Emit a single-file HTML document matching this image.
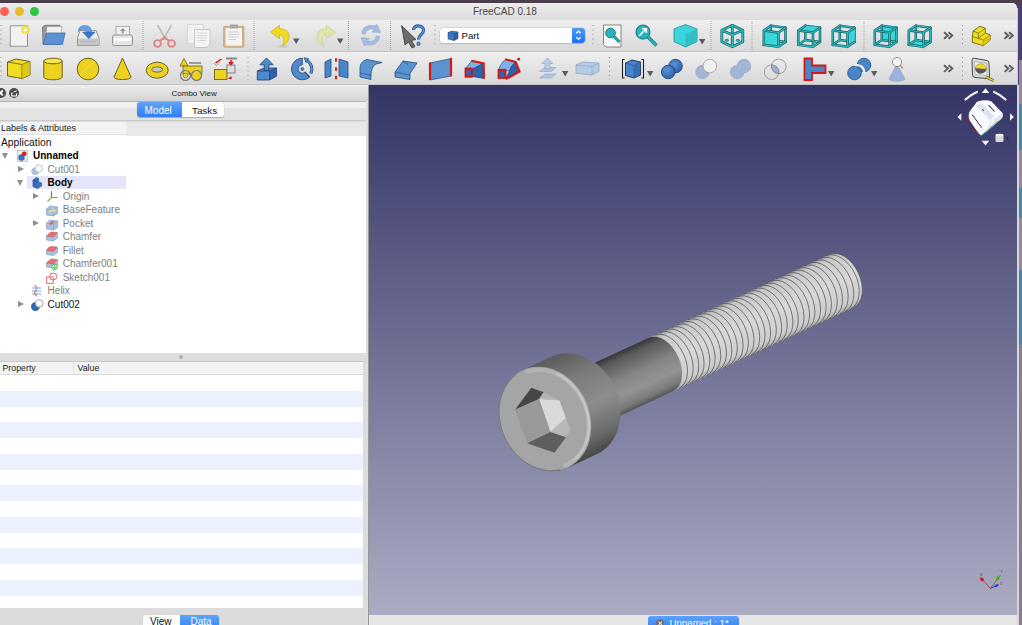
<!DOCTYPE html>
<html><head><meta charset="utf-8">
<style>
*{margin:0;padding:0;box-sizing:border-box}
html,body{width:1022px;height:625px;overflow:hidden;background:#4b3f4b;font-family:"Liberation Sans",sans-serif}
.abs{position:absolute}
#win{position:absolute;left:0;top:3px;width:1017px;height:622px;background:#e4e4e4;border-top-right-radius:5px;overflow:hidden}
#title{position:absolute;left:0;top:0;width:1017px;height:17px;background:linear-gradient(#ececec,#dddddd)}
#title .t{position:absolute;left:473px;top:3px;font-size:10px;color:#4a4a4a;white-space:nowrap}
.light{position:absolute;top:3.5px;width:9px;height:9px;border-radius:50%}
.tb{position:absolute;left:0;width:1017px;background:linear-gradient(#efefef,#d8d8d8);border-bottom:1px solid #c4c4c4}
.sep{position:absolute;width:1px;border-left:1px dotted #9a9a9a}
.ic{position:absolute}
.dd{position:absolute;width:0;height:0;border-left:3.5px solid transparent;border-right:3.5px solid transparent;border-top:6px solid #555}
.chev{position:absolute;font-size:13px;font-weight:bold;color:#555;letter-spacing:-3px}
#left{position:absolute;left:0;top:82px;width:369px;height:540px;background:#dcdcdc}
#view3d{position:absolute;left:369px;top:82px;width:648px;height:530px;background:linear-gradient(#343466,#ababc3)}
.row{position:absolute;left:0;white-space:nowrap;font-size:10px;height:13.5px;line-height:13.5px}
.tri{position:absolute;width:0;height:0}
</style></head><body>
<div id="win">
  <div id="title">
    <div class="light" style="left:0;background:#fc5f57"></div>
    <div class="light" style="left:15px;background:#e8bd2d"></div>
    <div class="light" style="left:30px;background:#2ac940"></div>
    <div class="t">FreeCAD 0.18</div>
  </div>
  <div class="tb" id="tb1" style="top:17px;height:32px"></div>
  <div class="tb" id="tb2" style="top:49px;height:33px"></div>
  <!--TB--><svg id="tbicons" class="abs" style="left:0;top:-3px" width="1022" height="86" viewBox="0 0 1022 86">
<line x1="1" y1="25" x2="1" y2="47" stroke="#8c8c8c" stroke-width="1" stroke-dasharray="1 3.5"/>
<rect x="10.3" y="25.8" width="17.2" height="20.4" fill="#f2f2f2" stroke="#8a8a8a" stroke-width="0.9"/>
<circle cx="25.4" cy="29.9" r="4.3" fill="#f2e23a" opacity="0.95"/><circle cx="25.4" cy="29.9" r="1.6" fill="#fff"/>
<path d="M42.5,27 L45,25.3 L60,25.3 L60,44 L43,44 Z" fill="#9a9a9a" stroke="#6f6f6f" stroke-width="0.8"/>
<path d="M47,26.5 L62,26.5 L61,34 L46,34 Z" fill="#f0f0f0" stroke="#999" stroke-width="0.6"/>
<path d="M46.5,33 L65.2,33 L62.3,44.5 L43,44.5 Z" fill="#5b90d2" stroke="#3f6fae" stroke-width="0.8"/>
<path d="M80,30.5 L96,30.5 L99,38 L99,45.5 L77.5,45.5 L77.5,38 Z" fill="#ececec" stroke="#8c8c8c" stroke-width="0.9"/>
<rect x="78" y="38.5" width="20.5" height="6.8" fill="#c6c6c6"/><path d="M80,41.5 h16" stroke="#b0b0b0" stroke-width="0.8"/>
<path d="M78.3,31.5 C78,26.5 83.5,24.3 88,26 C90.5,27 91.8,29.5 91.5,32.5 L86.2,32.5 C86.2,30.5 84.8,28.8 82.5,29.2 C80.5,29.6 79.2,30.5 78.3,31.5 Z" fill="#6ba0e0" stroke="#3f74b8" stroke-width="0.5"/>
<path d="M82.5,32 H95 L88.8,38.8 Z" fill="#3a78cf" stroke="#2d5ea6" stroke-width="0.5"/>
<rect x="116" y="26.3" width="13.5" height="10" fill="#f0f0f0" stroke="#999" stroke-width="0.8"/>
<path d="M122.8,28 l-3,3 h2 v2.5 h2 v-2.5 h2 z" fill="#9a9a9a"/>
<rect x="112.5" y="35" width="20" height="10.5" rx="2" fill="#e6e6e6" stroke="#8c8c8c" stroke-width="0.9"/>
<rect x="114" y="38" width="17" height="3" fill="#fdfdfd"/>
<line x1="143" y1="21" x2="143" y2="51" stroke="#8e8e8e" stroke-width="1" stroke-dasharray="1 1" opacity="0.75"/>
<path d="M157.5,25 L166,40 M171.5,25 L163,40" stroke="#bbbbbb" stroke-width="1.6" fill="none"/>
<circle cx="157.5" cy="43.5" r="3.4" fill="none" stroke="#de8484" stroke-width="1.9"/><circle cx="171.5" cy="43.5" r="3.4" fill="none" stroke="#de8484" stroke-width="1.9"/>
<path d="M160,41 L164.5,37 L169,41" fill="none" stroke="#de8484" stroke-width="1.8"/>
<rect x="187.5" y="24.5" width="16" height="19" rx="1" fill="#f1f1f1" stroke="#d0d0d0" stroke-width="0.8"/>
<path d="M194.5,29.5 H210 V44 L206.5,47.5 H194.5 Z" fill="#f4f4f4" stroke="#bdbdbd" stroke-width="0.8"/>
<path d="M197,33 h10 M197,35.5 h10 M197,38 h10 M197,40.5 h9" stroke="#cfcfcf" stroke-width="0.8"/>
<rect x="223.5" y="26.3" width="20.5" height="21" rx="0.8" fill="#d4b088" stroke="#c8a070" stroke-width="0.6"/>
<rect x="225.5" y="28" width="16.5" height="17.7" fill="#f4f4f4"/>
<path d="M230,24.5 h8 v4 h-8 z" fill="#a8a8a8"/>
<path d="M228,32 h11 M228,34.5 h11 M228,37 h11 M228,39.5 h8" stroke="#c8c8c8" stroke-width="0.8"/>
<line x1="254" y1="21" x2="254" y2="51" stroke="#8e8e8e" stroke-width="1" stroke-dasharray="1 1" opacity="0.75"/>
<path d="M270.5,32 L279.5,25.3 L279.5,28.8 C286,28.3 289.5,32.5 289,37.5 C288.5,41.5 285.5,44.5 282,46 C284,42.5 284.8,38.5 282.5,36 C281.5,35 280.5,35 279.5,35.2 L279.5,38.7 Z" fill="#f2da22" stroke="#c9ae12" stroke-width="0.7" stroke-linejoin="round"/>
<ellipse cx="283" cy="46.5" rx="6" ry="1.3" fill="#aaa" opacity="0.35"/>
<path d="M293,38.5 h6.4 l-3.2,5.6 z" fill="#5a5a5a"/>
<path d="M335.5,32 L326.5,25.3 L326.5,28.8 C320,28.3 316.5,32.5 317,37.5 C317.5,41.5 320.5,44.5 324,46 C322,42.5 321.2,38.5 323.5,36 C324.5,35 325.5,35 326.5,35.2 L326.5,38.7 Z" fill="#dfe4a8" stroke="#c8cf94" stroke-width="0.7" stroke-linejoin="round"/>
<path d="M337,38.5 h6.4 l-3.2,5.6 z" fill="#5a5a5a"/>
<line x1="348.5" y1="21" x2="348.5" y2="51" stroke="#8e8e8e" stroke-width="1" stroke-dasharray="1 1" opacity="0.75"/>
<path d="M362,34 C362,27 368,24.5 374,26 L377,24.5 L380.5,32.5 L372,32 L374.5,29.5 C369,28 365,31 365.5,34 Z" fill="#a2bde0" stroke="#8fabd2" stroke-width="0.6"/>
<path d="M379.5,36 C379.5,43 373.5,46 367.5,44.5 L364.5,46 L361,37.8 L369.5,38.3 L367,40.8 C372.5,42.5 376.5,39.5 376,36 Z" fill="#a2bde0" stroke="#8fabd2" stroke-width="0.6"/>
<line x1="390.5" y1="21" x2="390.5" y2="51" stroke="#8e8e8e" stroke-width="1" stroke-dasharray="1 1" opacity="0.75"/>
<path d="M401.5,25.5 L416,39.5 L411.5,40.5 L415,46.5 L412,48 L408.5,42 L405,45 Z" fill="#6b6b6b" stroke="#3a3a3a" stroke-width="0.8"/>
<path d="M413.5,30 C413.5,24.5 423.5,24.5 423.5,30.5 C423.5,34.5 418.5,35 418.5,39.5" fill="none" stroke="#2d5c99" stroke-width="3.2"/>
<path d="M413.5,30 C413.5,24.5 423.5,24.5 423.5,30.5 C423.5,34.5 418.5,35 418.5,39.5" fill="none" stroke="#4d8fd6" stroke-width="1.6"/>
<rect x="417" y="42" width="3" height="3.5" rx="1" fill="#4d8fd6" stroke="#2d5c99" stroke-width="0.7"/>
<line x1="435" y1="25" x2="435" y2="47" stroke="#8c8c8c" stroke-width="1" stroke-dasharray="1 3.5"/>
<line x1="593" y1="25" x2="593" y2="47" stroke="#8c8c8c" stroke-width="1" stroke-dasharray="1 3.5"/>
<path d="M603.5,25 H621 V47 H606 L603.5,44.5 Z" fill="#f7f7f7" stroke="#6a6a6a" stroke-width="0.8"/>
<circle cx="610.5" cy="33" r="4.8" fill="#27b5bd" stroke="#137a80" stroke-width="1"/>
<line x1="614" y1="36.5" x2="619.5" y2="42" stroke="#137a80" stroke-width="3"/><line x1="614" y1="36.5" x2="619.5" y2="42" stroke="#27b5bd" stroke-width="1.6"/>
<circle cx="643" cy="32" r="7" fill="#27b5bd" stroke="#137a80" stroke-width="1.1"/>
<path d="M639,36 L646,29 M642,28.7 H646.3 V33" fill="none" stroke="#fff" stroke-width="1.6"/>
<line x1="648" y1="37" x2="656.5" y2="45.5" stroke="#137a80" stroke-width="3.4"/><line x1="648" y1="37" x2="656.5" y2="45.5" stroke="#27b5bd" stroke-width="1.8"/>
<path d="M685.5,24.5 L697,29 L697,41.5 L685.5,47 L674,41.5 L674,29 Z" fill="#3cd5dc" stroke="#1b8d92" stroke-width="0.8"/>
<path d="M685.5,34 L697,29 L697,41.5 L685.5,47 Z" fill="#2fb8c0" opacity="0.8"/>
<path d="M699,39 h6.4 l-3.2,5.6 z" fill="#5a5a5a"/>
<line x1="711" y1="21" x2="711" y2="51" stroke="#8e8e8e" stroke-width="1" stroke-dasharray="1 1" opacity="0.75"/>
<path d="M732.3,25.3 L742.8,30.3 L742.8,41.8 L732.3,46.8 L721.8,41.8 L721.8,30.3 Z M721.8,30.3 L732.3,34.8 L742.8,30.3 M732.3,34.8 L732.3,46.8 M732.3,25.3 L732.3,32.8" fill="none" stroke="#17686b" stroke-width="2.8" stroke-linejoin="round"/><path d="M732.3,25.3 L742.8,30.3 L742.8,41.8 L732.3,46.8 L721.8,41.8 L721.8,30.3 Z M721.8,30.3 L732.3,34.8 L742.8,30.3 M732.3,34.8 L732.3,46.8 M732.3,25.3 L732.3,32.8" fill="none" stroke="#2fb9be" stroke-width="1.4" stroke-linejoin="round"/><ellipse cx="726.8" cy="40.3" rx="1.8" ry="1" fill="#2fb9be" stroke="#17686b" stroke-width="0.7"/><ellipse cx="737.8" cy="40.3" rx="1.8" ry="1" fill="#2fb9be" stroke="#17686b" stroke-width="0.7"/>
<line x1="752" y1="21" x2="752" y2="51" stroke="#8e8e8e" stroke-width="1" stroke-dasharray="1 1" opacity="0.75"/>
<path d="M770.8,25.7 L785.5,27.7 M785.5,27.7 L785.5,42.0 M785.5,42.0 L770.8,40.0 M770.8,40.0 L770.8,25.7 M763.8,44.8 L770.8,40.0" fill="none" stroke="#17686b" stroke-width="2.6" stroke-linecap="round"/><path d="M770.8,25.7 L785.5,27.7 M785.5,27.7 L785.5,42.0 M785.5,42.0 L770.8,40.0 M770.8,40.0 L770.8,25.7 M763.8,44.8 L770.8,40.0" fill="none" stroke="#2fb9be" stroke-width="1.2" stroke-linecap="round"/><polygon points="763.8,30.5 778.5,32.5 778.5,46.8 763.8,44.8" fill="#3ad6dc"/><path d="M763.8,30.5 L770.8,25.7 M778.5,32.5 L785.5,27.7 M778.5,46.8 L785.5,42.0 M763.8,30.5 L778.5,32.5 M778.5,32.5 L778.5,46.8 M778.5,46.8 L763.8,44.8 M763.8,44.8 L763.8,30.5" fill="none" stroke="#17686b" stroke-width="2.6" stroke-linecap="round"/><path d="M763.8,30.5 L770.8,25.7 M778.5,32.5 L785.5,27.7 M778.5,46.8 L785.5,42.0 M763.8,30.5 L778.5,32.5 M778.5,32.5 L778.5,46.8 M778.5,46.8 L763.8,44.8 M763.8,44.8 L763.8,30.5" fill="none" stroke="#2fb9be" stroke-width="1.2" stroke-linecap="round"/>
<path d="M805.3,25.7 L820.0,27.7 M820.0,27.7 L820.0,42.0 M820.0,42.0 L805.3,40.0 M805.3,40.0 L805.3,25.7 M798.3,44.8 L805.3,40.0" fill="none" stroke="#17686b" stroke-width="2.6" stroke-linecap="round"/><path d="M805.3,25.7 L820.0,27.7 M820.0,27.7 L820.0,42.0 M820.0,42.0 L805.3,40.0 M805.3,40.0 L805.3,25.7 M798.3,44.8 L805.3,40.0" fill="none" stroke="#2fb9be" stroke-width="1.2" stroke-linecap="round"/><polygon points="798.3,30.5 805.3,25.7 820.0,27.7 813.0,32.5" fill="#3ad6dc"/><path d="M798.3,30.5 L805.3,25.7 M813.0,32.5 L820.0,27.7 M813.0,46.8 L820.0,42.0 M798.3,30.5 L813.0,32.5 M813.0,32.5 L813.0,46.8 M813.0,46.8 L798.3,44.8 M798.3,44.8 L798.3,30.5" fill="none" stroke="#17686b" stroke-width="2.6" stroke-linecap="round"/><path d="M798.3,30.5 L805.3,25.7 M813.0,32.5 L820.0,27.7 M813.0,46.8 L820.0,42.0 M798.3,30.5 L813.0,32.5 M813.0,32.5 L813.0,46.8 M813.0,46.8 L798.3,44.8 M798.3,44.8 L798.3,30.5" fill="none" stroke="#2fb9be" stroke-width="1.2" stroke-linecap="round"/>
<path d="M839.8,25.7 L854.5,27.7 M854.5,27.7 L854.5,42.0 M854.5,42.0 L839.8,40.0 M839.8,40.0 L839.8,25.7 M832.8,44.8 L839.8,40.0" fill="none" stroke="#17686b" stroke-width="2.6" stroke-linecap="round"/><path d="M839.8,25.7 L854.5,27.7 M854.5,27.7 L854.5,42.0 M854.5,42.0 L839.8,40.0 M839.8,40.0 L839.8,25.7 M832.8,44.8 L839.8,40.0" fill="none" stroke="#2fb9be" stroke-width="1.2" stroke-linecap="round"/><polygon points="847.5,32.5 854.5,27.7 854.5,42.0 847.5,46.8" fill="#3ad6dc"/><path d="M832.8,30.5 L839.8,25.7 M847.5,32.5 L854.5,27.7 M847.5,46.8 L854.5,42.0 M832.8,30.5 L847.5,32.5 M847.5,32.5 L847.5,46.8 M847.5,46.8 L832.8,44.8 M832.8,44.8 L832.8,30.5" fill="none" stroke="#17686b" stroke-width="2.6" stroke-linecap="round"/><path d="M832.8,30.5 L839.8,25.7 M847.5,32.5 L854.5,27.7 M847.5,46.8 L854.5,42.0 M832.8,30.5 L847.5,32.5 M847.5,32.5 L847.5,46.8 M847.5,46.8 L832.8,44.8 M832.8,44.8 L832.8,30.5" fill="none" stroke="#2fb9be" stroke-width="1.2" stroke-linecap="round"/>
<line x1="864" y1="21" x2="864" y2="51" stroke="#8e8e8e" stroke-width="1" stroke-dasharray="1 1" opacity="0.75"/>
<polygon points="881.8,25.7 896.5,27.7 896.5,42.0 881.8,40.0" fill="#3ad6dc"/><path d="M881.8,25.7 L896.5,27.7 M896.5,27.7 L896.5,42.0 M896.5,42.0 L881.8,40.0 M881.8,40.0 L881.8,25.7 M874.8,44.8 L881.8,40.0" fill="none" stroke="#17686b" stroke-width="2.6" stroke-linecap="round"/><path d="M881.8,25.7 L896.5,27.7 M896.5,27.7 L896.5,42.0 M896.5,42.0 L881.8,40.0 M881.8,40.0 L881.8,25.7 M874.8,44.8 L881.8,40.0" fill="none" stroke="#2fb9be" stroke-width="1.2" stroke-linecap="round"/><path d="M874.8,30.5 L881.8,25.7 M889.5,32.5 L896.5,27.7 M889.5,46.8 L896.5,42.0 M874.8,30.5 L889.5,32.5 M889.5,32.5 L889.5,46.8 M889.5,46.8 L874.8,44.8 M874.8,44.8 L874.8,30.5" fill="none" stroke="#17686b" stroke-width="2.6" stroke-linecap="round"/><path d="M874.8,30.5 L881.8,25.7 M889.5,32.5 L896.5,27.7 M889.5,46.8 L896.5,42.0 M874.8,30.5 L889.5,32.5 M889.5,32.5 L889.5,46.8 M889.5,46.8 L874.8,44.8 M874.8,44.8 L874.8,30.5" fill="none" stroke="#2fb9be" stroke-width="1.2" stroke-linecap="round"/>
<polygon points="908.8,44.8 923.5,46.8 930.5,42.0 915.8,40.0" fill="#3ad6dc"/><path d="M915.8,25.7 L930.5,27.7 M930.5,27.7 L930.5,42.0 M930.5,42.0 L915.8,40.0 M915.8,40.0 L915.8,25.7 M908.8,44.8 L915.8,40.0" fill="none" stroke="#17686b" stroke-width="2.6" stroke-linecap="round"/><path d="M915.8,25.7 L930.5,27.7 M930.5,27.7 L930.5,42.0 M930.5,42.0 L915.8,40.0 M915.8,40.0 L915.8,25.7 M908.8,44.8 L915.8,40.0" fill="none" stroke="#2fb9be" stroke-width="1.2" stroke-linecap="round"/><path d="M908.8,30.5 L915.8,25.7 M923.5,32.5 L930.5,27.7 M923.5,46.8 L930.5,42.0 M908.8,30.5 L923.5,32.5 M923.5,32.5 L923.5,46.8 M923.5,46.8 L908.8,44.8 M908.8,44.8 L908.8,30.5" fill="none" stroke="#17686b" stroke-width="2.6" stroke-linecap="round"/><path d="M908.8,30.5 L915.8,25.7 M923.5,32.5 L930.5,27.7 M923.5,46.8 L930.5,42.0 M908.8,30.5 L923.5,32.5 M923.5,32.5 L923.5,46.8 M923.5,46.8 L908.8,44.8 M908.8,44.8 L908.8,30.5" fill="none" stroke="#2fb9be" stroke-width="1.2" stroke-linecap="round"/>
<path d="M944,32.2 l3.8,3.3 l-3.8,3.3 M948.5,32.2 l3.8,3.3 l-3.8,3.3" fill="none" stroke="#5c5c5c" stroke-width="1.9"/>
<line x1="962.5" y1="25" x2="962.5" y2="47" stroke="#8c8c8c" stroke-width="1" stroke-dasharray="1 3.5"/>
<path d="M973,31 L980,26.2 L985.4,28.3 L985.4,33 L990.3,35 L990.3,40 L983.3,45.7 L972.4,42.5 L972.4,36.5 Z" fill="#f2dc1e" stroke="#5e5a10" stroke-width="0.8" stroke-linejoin="round"/>
<path d="M973,31 L978.4,33.2 L985.4,28.3 M978.4,33.2 L978.4,38 M972.4,36.5 L983.3,40 L990.3,35 M983.3,40 V45.7 M978.4,38 L985.4,33" fill="none" stroke="#5e5a10" stroke-width="0.7"/>
<path d="M983.3,40 L990.3,35 V40 L983.3,45.7 Z" fill="#d8c010"/>
<path d="M1004.5,32.2 l3.8,3.3 l-3.8,3.3 M1009.0,32.2 l3.8,3.3 l-3.8,3.3" fill="none" stroke="#5c5c5c" stroke-width="1.9"/>
<line x1="1" y1="57" x2="1" y2="80" stroke="#8c8c8c" stroke-width="1" stroke-dasharray="1 3.5"/>
<line x1="248" y1="57" x2="248" y2="80" stroke="#8c8c8c" stroke-width="1" stroke-dasharray="1 3.5"/>
<path d="M562,71 h6.4 l-3.2,5.6 z" fill="#5a5a5a"/>
<line x1="609.5" y1="57" x2="609.5" y2="80" stroke="#8c8c8c" stroke-width="1" stroke-dasharray="1 3.5"/>
<path d="M647,71 h6.4 l-3.2,5.6 z" fill="#5a5a5a"/>
<path d="M828,71 h6.4 l-3.2,5.6 z" fill="#5a5a5a"/>
<path d="M871,71 h6.4 l-3.2,5.6 z" fill="#5a5a5a"/>
<path d="M944,65.3 l3.8,3.3 l-3.8,3.3 M948.5,65.3 l3.8,3.3 l-3.8,3.3" fill="none" stroke="#5c5c5c" stroke-width="1.9"/>
<line x1="962.5" y1="57" x2="962.5" y2="80" stroke="#8c8c8c" stroke-width="1" stroke-dasharray="1 3.5"/>
<path d="M1004.5,65.3 l3.8,3.3 l-3.8,3.3 M1009.0,65.3 l3.8,3.3 l-3.8,3.3" fill="none" stroke="#5c5c5c" stroke-width="1.9"/>
<path d="M7.5,62 L16,59 L30,61.5 L30,75 L22,78.5 L7.5,76 Z" fill="#f1dc22" stroke="#5c5410" stroke-width="0.9" stroke-linejoin="round"/>
<path d="M7.5,62 L22,64.5 L30,61.5 M22,64.5 V78.5" fill="none" stroke="#5c5410" stroke-width="0.8"/>
<path d="M22,64.5 L30,61.5 L30,75 L22,78.5 Z" fill="#d6bd10" opacity="0.7"/>
<path d="M43.8,61 V77 A9.2,2.8 0 0 0 62.2,77 V61" fill="#ecd21e" stroke="#5c5410" stroke-width="0.9"/>
<ellipse cx="53" cy="61" rx="9.2" ry="2.8" fill="#f7e84a" stroke="#5c5410" stroke-width="0.9"/>
<circle cx="88" cy="69" r="10.8" fill="#ecd21e" stroke="#5c5410" stroke-width="0.9"/>
<path d="M80,75 Q88,66 95,62" stroke="#f7e96a" stroke-width="1" fill="none" opacity="0.6"/>
<path d="M122.5,58 L131,77 A8.5,2.6 0 0 1 114,77 Z" fill="#ecd21e" stroke="#5c5410" stroke-width="0.9" stroke-linejoin="round"/>
<ellipse cx="157.2" cy="70.2" rx="11" ry="8" fill="#ecd21e" stroke="#5c5410" stroke-width="0.9"/>
<ellipse cx="157.2" cy="69.5" rx="5.5" ry="2.6" fill="#c8c8c8" stroke="#5c5410" stroke-width="0.8"/>
<path d="M184,58.5 L188,66 H180 Z" fill="#ecd21e" stroke="#5c5410" stroke-width="0.7"/>
<rect x="189" y="62" width="12" height="2" fill="#9a9a9a"/>
<rect x="183" y="66" width="19" height="8" fill="#ecd21e" stroke="#5c5410" stroke-width="0.7"/>
<circle cx="185.5" cy="75.5" r="5" fill="none" stroke="#777" stroke-width="1.2"/><circle cx="185.5" cy="75.5" r="2.3" fill="#ecd21e" stroke="#666" stroke-width="0.6"/>
<circle cx="196.5" cy="75.5" r="5" fill="#ecd21e" stroke="#777" stroke-width="1.2"/>
<rect x="214.5" y="69.5" width="12.5" height="10" fill="#ecd21e" stroke="#5c5410" stroke-width="0.8"/>
<rect x="227" y="65" width="8" height="8" fill="#ddd" stroke="#777" stroke-width="0.9"/>
<rect x="226" y="57.5" width="11" height="2" fill="#888"/>
<path d="M231,60 V64 M229,62 L231,64.5 L233,62" stroke="#d91616" stroke-width="1.5" fill="none"/>
<path d="M216,63 L220,60 M218.5,61 l3,-2" stroke="#d91616" stroke-width="1.5"/><rect x="215" y="62" width="3" height="3" fill="none" stroke="#777" stroke-width="0.7" transform="rotate(45 216.5 63.5)"/>
<path d="M228,79 l3,-3 l1,3 z" fill="#d91616"/>
<path d="M257.3,71 L264,68 L276.5,68 L276.5,76.3 L269.5,80 L257.3,80 Z" fill="#4f8ad0" stroke="#1c3d6e" stroke-width="0.8" stroke-linejoin="round"/>
<path d="M269.5,71 L276.5,68 L276.5,76.3 L269.5,80 Z" fill="#2f62a8"/><path d="M257.3,71 L269.5,71 L276.5,68 M269.5,71 V80" fill="none" stroke="#1c3d6e" stroke-width="0.7"/>
<path d="M266.5,58 L273.2,64.8 H268.8 V70.5 H264.2 V64.8 H259.8 Z" fill="#4f8ad0" stroke="#1c3d6e" stroke-width="0.8" stroke-linejoin="round"/>
<path d="M302.30,58.20 A10.8,10.8 0 1 0 309.94,76.64 L305.27,71.97 A4.2,4.2 0 1 1 302.30,64.80 Z" fill="#4f8ad0" stroke="#1c3d6e" stroke-width="0.8" stroke-linejoin="round"/>
<path d="M305.00,72.22 L309.24,77.27" stroke="#1c3d6e" stroke-width="0.8"/><path d="M302.30,58.20 A10.8,10.8 0 1 0 309.94,76.64 L305.27,71.97 A4.2,4.2 0 1 1 302.30,64.80 Z" fill="none"/>
<circle cx="302.3" cy="69" r="1.6" fill="#4f8ad0" stroke="#1c3d6e" stroke-width="0.5"/>
<path d="M305.55,60.07 A9.5,9.5 0 0 1 310.69,73.46" fill="none" stroke="#1c3d6e" stroke-width="3"/><path d="M305.55,60.07 A9.5,9.5 0 0 1 310.69,73.46" fill="none" stroke="#5a94d8" stroke-width="1.8"/>
<path d="M303.90,57.61 l4.8,1.2 l-2.6,3.6 z" fill="#5a94d8" stroke="#1c3d6e" stroke-width="0.6"/>
<path d="M325,62 L331,59 V76 L325,78 Z" fill="#4a86c6" stroke="#1f4f80" stroke-width="0.8"/>
<path d="M339,59 L348,62 V78 L339,76 Z" fill="#4a86c6" stroke="#1f4f80" stroke-width="0.8"/>
<rect x="335" y="58" width="2" height="4" rx="1" fill="#d92020"/><rect x="335" y="67" width="2" height="4" rx="1" fill="#d92020"/><rect x="335" y="75.5" width="2" height="4" rx="1" fill="#d92020"/>
<path d="M360,76 V69 C360,64 362,61 367,59.5 L382,62.5 L376,64 C373,66 371,69 371,76 V79.5 L360,77 Z" fill="#5a93d0" stroke="#1f4f80" stroke-width="0.8" stroke-linejoin="round"/>
<path d="M360,73 L371,75.5" stroke="#1f4f80" stroke-width="0.6"/>
<path d="M395,72 L403,61 L417,63 L410,73.5 V79.5 L395,77 Z" fill="#5a93d0" stroke="#1f4f80" stroke-width="0.8" stroke-linejoin="round"/>
<path d="M395,72 L410,75 M403,61.5 L408,64.5" stroke="#1f4f80" stroke-width="0.6"/>
<path d="M430,63 L451,58.5 V76 L430,80 Z" fill="#5a93d0" stroke="#1f4f80" stroke-width="0.7"/>
<path d="M430,62.5 V80 M451,58 V76.5" stroke="#d91616" stroke-width="2.2"/>
<path d="M465.5,68.5 L471.5,61 L483.5,63.5 L472,69.5 Z" fill="#7fb0e8" stroke="#1c3d6e" stroke-width="0.6"/>
<path d="M472,69.5 L483.5,63.5 L483.8,78.5 L472,76.5 Z" fill="#2f62a8" stroke="#1c3d6e" stroke-width="0.6"/>
<rect x="465.5" y="68.5" width="6.3" height="8.3" fill="#2f62a8" stroke="#e01010" stroke-width="1.8"/>
<path d="M471.3,60.8 L483.7,63.3 L484,78.8" fill="none" stroke="#e01010" stroke-width="2"/>
<path d="M498.5,70.5 C500,65 503,61 505.5,59.5 L515.5,62 C512,65 510.5,68 509.5,71 Z" fill="#7fb0e8" stroke="#1c3d6e" stroke-width="0.6"/>
<path d="M505.5,78.5 L509.5,71 C510.5,68 512,65 515.5,62 L519.5,71.5 L506,79 Z" fill="#2f62a8" stroke="#1c3d6e" stroke-width="0.6"/>
<rect x="498.5" y="69.8" width="7" height="8.2" fill="#2f62a8" stroke="#e01010" stroke-width="1.8"/>
<path d="M505.3,59.3 L515.6,61.9 L519.6,71.6 L505.8,79.2" fill="none" stroke="#e01010" stroke-width="2"/>
<circle cx="518.7" cy="59.2" r="1.4" fill="#c01010"/>
<path d="M539.5,78 L545,74 H556 L551,78 Z" fill="#b2c8e2" stroke="#8aa3c2" stroke-width="0.6"/>
<path d="M539.5,71.5 L545,67.5 H556 L551,71.5 Z" fill="#b2c8e2" stroke="#8aa3c2" stroke-width="0.6"/>
<path d="M547.5,58 L553,63.5 H550 V69 H545 V63.5 H542 Z" fill="#b8cde6" stroke="#8aa3c2" stroke-width="0.6"/>
<path d="M576,65 L582.5,62 L599,63 V71.5 L592,75 L576,73.5 Z" fill="#b5cbe5" stroke="#8aa3c2" stroke-width="0.7"/>
<path d="M576,65 L592,66.5 L599,63 M592,66.5 V75" fill="none" stroke="#8aa3c2" stroke-width="0.6"/>
<path d="M624.5,59.5 h-2 v18.5 h2 M641.5,59.5 h2 v18.5 h-2" fill="none" stroke="#222" stroke-width="1.1"/>
<path d="M625.5,63 L632,60 L640.5,62 V75 L634,78 L625.5,75.5 Z" fill="#4a84cc" stroke="#1c3050" stroke-width="0.9"/>
<path d="M625.5,63 L634,65.5 L640.5,62 M634,65.5 V78" fill="none" stroke="#1f4f80" stroke-width="0.6"/><path d="M634,65.5 L640.5,62 V75 L634,78 Z" fill="#2f62a0" opacity="0.6"/>
<defs><radialGradient id="gb" cx="0.4" cy="0.35" r="0.7"><stop offset="0" stop-color="#5a92d6"/><stop offset="1" stop-color="#2a5fa8"/></radialGradient></defs>
<circle cx="675.5" cy="66.1" r="6.8" fill="url(#gb)" stroke="#1f3f6a" stroke-width="0.8"/><circle cx="668.2" cy="72" r="6.8" fill="url(#gb)" stroke="#1f3f6a" stroke-width="0.8"/>
<circle cx="702.5" cy="72" r="6.8" fill="#a0b6d6" stroke="#95a8c4" stroke-width="0.6"/><circle cx="709.8" cy="66.1" r="6.8" fill="#f0f0f0" stroke="#9a9a9a" stroke-width="0.8"/>
<circle cx="737.2" cy="72" r="6.8" fill="#a0b6d6" stroke="#98a6bb" stroke-width="0.7"/><circle cx="744" cy="66.1" r="6.8" fill="#a0b6d6" stroke="#98a6bb" stroke-width="0.7"/><circle cx="737.2" cy="72" r="6.3" fill="#a0b6d6"/>
<path d="M778.74,73.70 A7.3,7.3 0 0 1 771.66,64.90 A7.3,7.3 0 0 1 778.74,73.70 Z" fill="#9bb3d8" stroke="#6f84a8" stroke-width="0.5"/>
<circle cx="771.6" cy="72.2" r="7.3" fill="none" stroke="#8a8a8a" stroke-width="0.8"/><circle cx="778.8" cy="66.4" r="7.3" fill="none" stroke="#8a8a8a" stroke-width="0.8"/>
<path d="M804.5,58.5 H812 V65.5 H825.5 V73 H812 V80 H804.5 Z" fill="#4a86c6" stroke="#d91616" stroke-width="1.8"/>
<circle cx="864" cy="65" r="6.8" fill="#4a86c6" stroke="#1f4f80" stroke-width="0.8"/><circle cx="854.5" cy="73" r="6.8" fill="#4a86c6" stroke="#1f4f80" stroke-width="0.8"/>
<path d="M855,65.5 A6.8,6.8 0 0 1 864,73" fill="none" stroke="#f0f0f0" stroke-width="2.2"/>
<path d="M897,64 L905,79 A8,2.2 0 0 1 889,79 Z" fill="#9bb3d8" stroke="#8c9ec0" stroke-width="0.6"/>
<circle cx="897" cy="62" r="4.6" fill="#f6f6f6" stroke="#888" stroke-width="0.9"/><path d="M900,65 L903,68.5" stroke="#d09060" stroke-width="1.5"/>
<path d="M972,60 Q972,58 974,58.2 L987,60.5 Q989,61 989,63 L989.5,76 Q989.5,78 987.5,78.5 L975,77.5 Q972.5,77 972.5,75 Z" fill="#dcdcdc" stroke="#3a3a3a" stroke-width="0.9"/>
<path d="M974.5,61.5 L986.5,63.5 L987,75.5 L975,74.5 Z" fill="#efefef" stroke="#888" stroke-width="0.5"/>
<path d="M975,68.3 A5.8,5.6 0 0 1 986.5,69.2 Z" fill="#f0dc1e" stroke="#555" stroke-width="0.4"/><path d="M975,68.3 A5.8,5.6 0 0 0 986.5,69.2 Z" fill="#575757"/>
<path d="M986,77 L993.5,80.5" stroke="#3a3a3a" stroke-width="2.8"/><path d="M986,77 L993.5,80.5" stroke="#eed830" stroke-width="1.6"/>
</svg><div id="combo" class="abs" style="left:440px;top:25px;width:144.5px;height:14.5px;border-radius:3.5px;background:#fff;box-shadow:0 0 0 0.5px #c6c6c6,0 0.6px 1px rgba(0,0,0,0.2)">
  <div class="abs" style="left:131.5px;top:0;width:13px;height:14.5px;border-radius:0 3.5px 3.5px 0;background:linear-gradient(#4d9bf9,#1e6ff0)"></div>
  <svg class="abs" style="left:131.5px;top:0" width="13" height="14.5"><path d="M4.3,5.3 L6.5,3.2 L8.7,5.3 M4.3,9.2 L6.5,11.3 L8.7,9.2" fill="none" stroke="#fff" stroke-width="1.2"/></svg>
  <svg class="abs" style="left:6.5px;top:2px" width="12" height="11"><path d="M1,2.5 L5,1 L11,2 V8.5 L7,10.5 L1,9 Z" fill="#3f78bd" stroke="#24558f" stroke-width="0.6"/><path d="M1,2.5 L7,4 L11,2 M7,4 V10.5" fill="none" stroke="#24558f" stroke-width="0.5"/><path d="M7,4 L11,2 V8.5 L7,10.5 Z" fill="#2c5f9e"/></svg>
  <div class="abs" style="left:21.5px;top:1px;font-size:9.6px;line-height:13px;color:#111">Part</div>
</div><!--/TB-->
  <div id="left">
    <div class="abs" id="cvhdr" style="left:0;top:0;width:369px;height:17px;background:linear-gradient(#ededed,#d3d3d3);border-bottom:1px solid #b4b4b4">
      <div class="abs" style="left:-4.5px;top:3px;width:10px;height:10px;border-radius:50%;background:#4a4a4a"></div>
      <div class="abs" style="left:9.2px;top:3px;width:10.3px;height:10.3px;border-radius:50%;background:#4a4a4a"></div>
      <div class="abs" style="left:171.5px;top:4px;font-size:8px;color:#1a1a1a;white-space:nowrap">Combo View</div>
    </div>
    <div class="abs" style="left:0;top:17px;width:366px;height:6px;background:#efefef"></div>
    <div class="abs" style="left:0;top:23px;width:366px;height:13px;background:#e3e3e3;border-bottom:1px solid #c9c9c9"></div>
    <div class="abs" style="left:137px;top:17.2px;width:87px;height:15px;border-radius:3px;background:#fff;box-shadow:0 0.5px 1px rgba(0,0,0,0.25)"></div>
    <div class="abs" style="left:137px;top:17.2px;width:45px;height:15px;border-radius:3px 0 0 3px;background:linear-gradient(#5fa3f9,#2f7ef5)"></div>
    <div class="abs" style="left:144.5px;top:18.5px;font-size:10px;color:#fff;line-height:13px">Model</div>
    <div class="abs" style="left:192px;top:18.5px;font-size:9.8px;color:#111;line-height:13px">Tasks</div>
    <!-- tree -->
    <div class="abs" id="tree" style="left:0;top:37px;width:366px;height:231px;background:#fff;overflow:hidden">
      <div class="abs" style="left:0;top:0;width:126px;height:13px;background:#f3f3f3;border-bottom:1px solid #e0e0e0"></div>
      <div class="abs" style="left:126px;top:0;width:240px;height:13.5px;background:#e9e9e9"></div>
      <div class="abs" style="left:1px;top:0;font-size:9px;line-height:13px;color:#222;white-space:nowrap">Labels &amp; Attributes</div>
      <div class="abs" style="left:27px;top:54px;width:99px;height:13px;background:#e4e4fa"></div>
      <div class="row" style="top:13.70px;left:1px;color:#111;font-size:10.3px;">Application</div>
      <div class="row" style="top:27.20px;left:33px;color:#000;font-weight:bold;font-size:10px;">Unnamed</div>
      <div class="tri" style="left:2px;top:31.0px;border-left:3.5px solid transparent;border-right:3.5px solid transparent;border-top:6px solid #8e8e8e"></div>
      <svg class="abs" style="left:17px;top:27.0px" width="14" height="14"><rect x="0.5" y="1.5" width="9.8" height="10.8" fill="#f2f2f2" stroke="#b8b8b8" stroke-width="0.8"/><path d="M1.8,6.5 L4.5,5.3 L7.2,6.5 V10.5 L4.5,11.8 L1.8,10.5 Z" fill="#3a70bf" stroke="#244f8c" stroke-width="0.5"/><circle cx="7.2" cy="4.8" r="2.4" fill="#d92020"/></svg>
      <div class="row" style="top:40.70px;left:47.6px;color:#7e7e7e;">Cut001</div>
      <div class="tri" style="left:17.5px;top:43.5px;border-top:3.5px solid transparent;border-bottom:3.5px solid transparent;border-left:6px solid #8e8e8e"></div>
      <svg class="abs" style="left:31px;top:40.5px" width="14" height="14"><circle cx="4.2" cy="8.2" r="3.8" fill="#a9c0de"/><circle cx="7.8" cy="5.5" r="3.7" fill="#fafafa" stroke="#b0b0b0" stroke-width="0.7"/></svg>
      <div class="row" style="top:54.20px;left:47.6px;color:#000;font-weight:bold;font-size:10px;">Body</div>
      <div class="tri" style="left:17px;top:58.0px;border-left:3.5px solid transparent;border-right:3.5px solid transparent;border-top:6px solid #8e8e8e"></div>
      <svg class="abs" style="left:32px;top:54.0px" width="14" height="14"><path d="M1,4 L4.5,1.5 L6.5,2.5 V6 L9.5,7 V10 L5.5,12.5 L1,10.5 Z" fill="#3a72c0" stroke="#234e8a" stroke-width="0.7" stroke-linejoin="round"/><path d="M1,4 L4,5.5 L6.5,3 M4,5.5 V12" fill="none" stroke="#234e8a" stroke-width="0.5"/></svg>
      <div class="row" style="top:67.70px;left:62.7px;color:#7e7e7e;">Origin</div>
      <div class="tri" style="left:33px;top:70.5px;border-top:3.5px solid transparent;border-bottom:3.5px solid transparent;border-left:6px solid #8e8e8e"></div>
      <svg class="abs" style="left:46px;top:67.5px" width="14" height="14"><path d="M5.5,1.2 V7.5" stroke="#d05050" stroke-width="1.2"/><path d="M5.5,7.5 H11.8" stroke="#6a8fc8" stroke-width="1.1"/><path d="M5.5,7.5 L1.5,11.5" stroke="#70c050" stroke-width="1.2"/></svg>
      <div class="row" style="top:81.20px;left:62.7px;color:#7e7e7e;">BaseFeature</div>
      <svg class="abs" style="left:46px;top:81.0px" width="14" height="14"><path d="M0.5,6 L4,3 L11.5,4 V10.5 L7.5,13 L0.5,12 Z" fill="#a9c1e0" stroke="#7a98c0" stroke-width="0.6"/><path d="M7.5,6.8 V13 M0.5,6 L7.5,6.8 L11.5,4" fill="none" stroke="#7a98c0" stroke-width="0.5"/><path d="M2,10 Q3,6 7,6.5 L7,5 L10,7.5 L7,9.8 V8.5 Q4,8.5 2,10 Z" fill="#e4dc8a"/></svg>
      <div class="row" style="top:94.70px;left:62.7px;color:#7e7e7e;">Pocket</div>
      <div class="tri" style="left:33px;top:97.5px;border-top:3.5px solid transparent;border-bottom:3.5px solid transparent;border-left:6px solid #8e8e8e"></div>
      <svg class="abs" style="left:46px;top:94.5px" width="14" height="14"><path d="M0.5,6 L4,3 L11.5,4 V10.5 L7.5,13 L0.5,12 Z" fill="#a9c1e0" stroke="#7a98c0" stroke-width="0.6"/><path d="M7.5,6.8 V13 M0.5,6 L7.5,6.8 L11.5,4" fill="none" stroke="#7a98c0" stroke-width="0.5"/><path d="M3,7 L6.5,4 L8.5,5 L5,8 Z" fill="#e06060"/></svg>
      <div class="row" style="top:108.20px;left:62.7px;color:#7e7e7e;">Chamfer</div>
      <svg class="abs" style="left:46px;top:108.0px" width="14" height="14"><path d="M0.5,6 L4,3 L11.5,3.5 V8 L7.5,11 L0.5,10 Z" fill="#a9c1e0" stroke="#7a98c0" stroke-width="0.6"/><path d="M0.5,6 L5,2 L11.5,2.5 L7.5,7 Z" fill="#e87070" stroke="#c05050" stroke-width="0.5"/></svg>
      <div class="row" style="top:121.70px;left:62.7px;color:#7e7e7e;">Fillet</div>
      <svg class="abs" style="left:46px;top:121.5px" width="14" height="14"><path d="M0.5,6.5 L4,3.5 L11.5,4 V8.5 L7.5,11.5 L0.5,10.5 Z" fill="#a9c1e0" stroke="#7a98c0" stroke-width="0.6"/><path d="M0.5,6.5 Q2,3 5,2.5 L11.5,3 Q9,5 7.5,7.5 Z" fill="#e87070" stroke="#c05050" stroke-width="0.5"/></svg>
      <div class="row" style="top:135.20px;left:62.7px;color:#7e7e7e;">Chamfer001</div>
      <svg class="abs" style="left:46px;top:135.0px" width="14" height="14"><path d="M0.5,6 L4,3 L11.5,3.5 V8 L7.5,11 L0.5,10 Z" fill="#a9c1e0" stroke="#7a98c0" stroke-width="0.6"/><path d="M0.5,6 L5,2 L11.5,2.5 L7.5,7 Z" fill="#e87070" stroke="#c05050" stroke-width="0.5"/><circle cx="8.5" cy="10" r="2.8" fill="#f4fff4" stroke="#40c040" stroke-width="1"/><path d="M8.5,8 V11.5 M7,10 L8.5,11.8 L10,10" stroke="#40c040" stroke-width="0.9" fill="none"/></svg>
      <div class="row" style="top:148.70px;left:62.7px;color:#7e7e7e;">Sketch001</div>
      <svg class="abs" style="left:46px;top:148.5px" width="14" height="14"><rect x="0.7" y="6" width="6.5" height="6.3" fill="none" stroke="#e06a6a" stroke-width="1"/><circle cx="7.2" cy="5.5" r="3.5" fill="none" stroke="#e06a6a" stroke-width="1"/></svg>
      <div class="row" style="top:162.20px;left:47.6px;color:#7e7e7e;">Helix</div>
      <svg class="abs" style="left:31px;top:162.0px" width="14" height="14"><path d="M1,4 H10 M1,7 H10 M1,10 H10" stroke="#8aa4cc" stroke-width="1"/><path d="M3,1.5 Q8,3 5,6 Q1,9 6,12" fill="none" stroke="#d06060" stroke-width="0.9"/><path d="M5,1.5 V12.5" stroke="#8aa4cc" stroke-width="0.7"/></svg>
      <div class="row" style="top:175.70px;left:47.6px;color:#111;">Cut002</div>
      <div class="tri" style="left:17.5px;top:178.5px;border-top:3.5px solid transparent;border-bottom:3.5px solid transparent;border-left:6px solid #8e8e8e"></div>
      <svg class="abs" style="left:31px;top:175.5px" width="14" height="14"><circle cx="4.4" cy="8.6" r="4.2" fill="#2f67b5" stroke="#244f8c" stroke-width="0.5"/><circle cx="8.2" cy="5.4" r="3.8" fill="#fafafa" stroke="#888" stroke-width="0.7"/></svg>
    </div>
    <!-- splitter -->
    <div class="abs" style="left:0;top:268px;width:366px;height:8.5px;background:#dedede;border-bottom:1px solid #c8c8c8"></div>
    <div class="abs" style="left:179px;top:270px;width:4px;height:4px;border-radius:50%;background:#b0b0b0"></div>
    <!-- property -->
    <div class="abs" id="prop" style="left:0;top:276.5px;width:363px;height:246.5px;background:#fff;overflow:hidden">
      <div class="abs" style="left:0;top:0;width:363px;height:13px;background:#f3f3f3;border-bottom:1px solid #d9d9d9"></div>
      <div class="abs" style="left:73px;top:1px;width:1px;height:11px;background:#e2e2e2"></div>
      <div class="abs" style="left:2.5px;top:0;font-size:8.8px;line-height:13px;color:#222">Property</div>
      <div class="abs" style="left:77.5px;top:0;font-size:8.8px;line-height:13px;color:#222">Value</div>
      <div class="abs" style="left:0;top:29.25px;width:363px;height:15.75px;background:#ebf1fd"></div>
      <div class="abs" style="left:0;top:60.75px;width:363px;height:15.75px;background:#ebf1fd"></div>
      <div class="abs" style="left:0;top:92.25px;width:363px;height:15.75px;background:#ebf1fd"></div>
      <div class="abs" style="left:0;top:123.75px;width:363px;height:15.75px;background:#ebf1fd"></div>
      <div class="abs" style="left:0;top:155.25px;width:363px;height:15.75px;background:#ebf1fd"></div>
      <div class="abs" style="left:0;top:186.75px;width:363px;height:15.75px;background:#ebf1fd"></div>
      <div class="abs" style="left:0;top:218.25px;width:363px;height:15.75px;background:#ebf1fd"></div>
    </div>
    <div class="abs" style="left:143px;top:529.5px;width:76px;height:16px;border-radius:3px;background:#fff;box-shadow:0 0.5px 1px rgba(0,0,0,0.25)"></div>
    <div class="abs" style="left:180px;top:529.5px;width:39px;height:16px;border-radius:0 3px 3px 0;background:linear-gradient(#5fa3f9,#2f7ef5)"></div>
    <div class="abs" style="left:150px;top:530px;font-size:10px;color:#111;line-height:13px">View</div>
    <div class="abs" style="left:190.5px;top:530px;font-size:10px;color:#fff;line-height:13px">Data</div>
  </div>
  <div id="view3d"></div>
</div>
<svg id="bolt" class="abs" style="left:0;top:0" width="1022" height="625" viewBox="0 0 1022 625">
<defs>
<linearGradient id="gThr" gradientUnits="userSpaceOnUse" x1="648.8" y1="338.6" x2="673.5" y2="391.8"><stop offset="0" stop-color="#9a9a9a"/><stop offset="0.08" stop-color="#c9c9c9"/><stop offset="0.5" stop-color="#d8d8d8"/><stop offset="0.9" stop-color="#cdcdcd"/><stop offset="1" stop-color="#a8a8a8"/></linearGradient>
<linearGradient id="gShk" gradientUnits="userSpaceOnUse" x1="648.8" y1="338.6" x2="673.5" y2="391.8"><stop offset="0" stop-color="#353535"/><stop offset="0.12" stop-color="#5a5a5a"/><stop offset="0.45" stop-color="#858585"/><stop offset="0.7" stop-color="#939393"/><stop offset="0.9" stop-color="#7a7a7a"/><stop offset="1" stop-color="#555"/></linearGradient>
<linearGradient id="gHead" gradientUnits="userSpaceOnUse" x1="537.0" y1="363.5" x2="582.1" y2="461.0"><stop offset="0" stop-color="#5c5c5c"/><stop offset="0.25" stop-color="#7a7a7a"/><stop offset="0.55" stop-color="#8d8d8d"/><stop offset="0.82" stop-color="#6e6e6e"/><stop offset="1" stop-color="#474747"/></linearGradient>
</defs>
<g transform="translate(0,-0.8)">
<path d="M648.84,338.62 L828.96,255.20 A18.90,29.30 -24.85 0 1 853.58,308.38 L673.46,391.80 A18.75,29.30 -24.85 0 1 648.84,338.62 Z" fill="url(#gThr)"/>
<path d="M828.96,255.20 A18.90,29.30 -24.85 0 1 853.58,308.38" fill="none" stroke="#555" stroke-width="0.8"/>
<path d="M654.37,336.06 A18.76,29.30 -24.85 0 1 679.00,389.23" fill="none" stroke="#404040" stroke-width="0.65"/>
<path d="M659.91,333.49 A18.76,29.30 -24.85 0 1 684.53,386.67" fill="none" stroke="#404040" stroke-width="0.65"/>
<path d="M665.44,330.93 A18.77,29.30 -24.85 0 1 690.07,384.11" fill="none" stroke="#404040" stroke-width="0.65"/>
<path d="M670.98,328.37 A18.77,29.30 -24.85 0 1 695.60,381.54" fill="none" stroke="#404040" stroke-width="0.65"/>
<path d="M676.51,325.80 A18.77,29.30 -24.85 0 1 701.14,378.98" fill="none" stroke="#404040" stroke-width="0.65"/>
<path d="M682.05,323.24 A18.78,29.30 -24.85 0 1 706.67,376.41" fill="none" stroke="#404040" stroke-width="0.65"/>
<path d="M687.58,320.68 A18.78,29.30 -24.85 0 1 712.21,373.85" fill="none" stroke="#404040" stroke-width="0.65"/>
<path d="M693.12,318.11 A18.79,29.30 -24.85 0 1 717.74,371.29" fill="none" stroke="#404040" stroke-width="0.65"/>
<path d="M698.65,315.55 A18.79,29.30 -24.85 0 1 723.28,368.72" fill="none" stroke="#404040" stroke-width="0.65"/>
<path d="M704.19,312.99 A18.80,29.30 -24.85 0 1 728.81,366.16" fill="none" stroke="#404040" stroke-width="0.65"/>
<path d="M709.72,310.42 A18.80,29.30 -24.85 0 1 734.35,363.60" fill="none" stroke="#404040" stroke-width="0.65"/>
<path d="M715.26,307.86 A18.81,29.30 -24.85 0 1 739.88,361.03" fill="none" stroke="#404040" stroke-width="0.65"/>
<path d="M720.79,305.30 A18.81,29.30 -24.85 0 1 745.42,358.47" fill="none" stroke="#404040" stroke-width="0.65"/>
<path d="M726.33,302.73 A18.82,29.30 -24.85 0 1 750.95,355.91" fill="none" stroke="#404040" stroke-width="0.65"/>
<path d="M731.86,300.17 A18.82,29.30 -24.85 0 1 756.49,353.34" fill="none" stroke="#404040" stroke-width="0.65"/>
<path d="M737.40,297.61 A18.82,29.30 -24.85 0 1 762.03,350.78" fill="none" stroke="#404040" stroke-width="0.65"/>
<path d="M742.93,295.04 A18.83,29.30 -24.85 0 1 767.56,348.22" fill="none" stroke="#404040" stroke-width="0.65"/>
<path d="M748.47,292.48 A18.83,29.30 -24.85 0 1 773.10,345.65" fill="none" stroke="#404040" stroke-width="0.65"/>
<path d="M754.00,289.92 A18.84,29.30 -24.85 0 1 778.63,343.09" fill="none" stroke="#404040" stroke-width="0.65"/>
<path d="M759.54,287.35 A18.84,29.30 -24.85 0 1 784.17,340.53" fill="none" stroke="#404040" stroke-width="0.65"/>
<path d="M765.07,284.79 A18.85,29.30 -24.85 0 1 789.70,337.96" fill="none" stroke="#404040" stroke-width="0.65"/>
<path d="M770.61,282.22 A18.85,29.30 -24.85 0 1 795.24,335.40" fill="none" stroke="#404040" stroke-width="0.65"/>
<path d="M776.15,279.66 A18.86,29.30 -24.85 0 1 800.77,332.84" fill="none" stroke="#404040" stroke-width="0.65"/>
<path d="M781.68,277.10 A18.86,29.30 -24.85 0 1 806.31,330.27" fill="none" stroke="#404040" stroke-width="0.65"/>
<path d="M787.22,274.53 A18.86,29.30 -24.85 0 1 811.84,327.71" fill="none" stroke="#404040" stroke-width="0.65"/>
<path d="M792.75,271.97 A18.87,29.30 -24.85 0 1 817.38,325.15" fill="none" stroke="#404040" stroke-width="0.65"/>
<path d="M798.29,269.41 A18.87,29.30 -24.85 0 1 822.91,322.58" fill="none" stroke="#404040" stroke-width="0.65"/>
<path d="M803.82,266.84 A18.88,29.30 -24.85 0 1 828.45,320.02" fill="none" stroke="#404040" stroke-width="0.65"/>
<path d="M809.36,264.28 A18.88,29.30 -24.85 0 1 833.98,317.45" fill="none" stroke="#404040" stroke-width="0.65"/>
<path d="M814.89,261.72 A18.89,29.30 -24.85 0 1 839.52,314.89" fill="none" stroke="#404040" stroke-width="0.65"/>
<path d="M820.43,259.15 A18.89,29.30 -24.85 0 1 845.05,312.33" fill="none" stroke="#404040" stroke-width="0.65"/>
<path d="M825.96,256.59 A18.90,29.30 -24.85 0 1 850.59,309.76" fill="none" stroke="#404040" stroke-width="0.65"/>
<path d="M557.19,381.07 L648.84,338.62 A18.75,29.30 -24.85 0 1 673.46,391.80 L581.81,434.24 A18.75,29.30 -24.85 0 1 557.19,381.07 Z" fill="url(#gShk)"/>
</g>
<path d="M522.43,370.27 L551.47,356.82 A44.57,53.70 -24.85 0 1 596.60,454.28 L567.57,467.73 A44.57,53.70 -24.85 0 1 522.43,370.27 Z" fill="url(#gHead)"/>
<ellipse cx="545.00" cy="419.00" rx="44.57" ry="53.70" transform="rotate(-24.85 545.00 419.00)" fill="#a5a5a5" />
<ellipse cx="544.09" cy="419.42" rx="39.84" ry="48.00" transform="rotate(-24.85 544.09 419.42)" fill="#a5a5a5" />
<polyline points="527.17,371.81 530.29,370.91 533.50,370.29 536.77,369.96 540.10,369.93 543.45,370.18 546.82,370.73 550.17,371.57 553.49,372.69 556.76,374.08 559.96,375.74 563.07,377.66 566.08,379.83 568.95,382.23 571.69,384.85 574.26,387.67 576.67,390.68 578.88,393.86 580.89,397.19 582.69,400.65 584.26,404.22 585.60,407.87 586.69,411.59 587.54,415.36 588.13,419.15 588.47,422.94 588.55,426.70 588.37,430.42 587.93,434.07 587.23,437.63 586.28,441.08 585.09,444.39 583.65,447.56 581.99,450.56 580.11,453.36 578.01,455.97 575.72,458.35 573.25,460.50 570.61,462.40 567.81,464.04 564.88,465.41" fill="none" stroke="#b9b9b9" stroke-width="3.8" stroke-opacity="0.75" stroke-linecap="round"/>
<polyline points="556.98,373.79 559.18,374.90 561.33,376.14 563.44,377.49 565.50,378.95 567.50,380.53 569.45,382.21 571.32,383.99 573.12,385.87 574.85,387.84 576.49,389.90 578.05,392.03 579.52,394.24 580.89,396.52 582.16,398.85 583.34,401.25 584.40,403.69 585.36,406.17 586.21,408.69 586.94,411.24 587.57,413.81 588.07,416.39 588.45,418.98 588.72,421.57 588.87,424.15 588.89,426.72 588.80,429.27 588.59,431.78 588.25,434.27 587.80,436.71 587.23,439.11 586.55,441.44 585.75,443.72 584.84,445.93 583.82,448.07 582.69,450.12 581.46,452.09 580.13,453.97 578.71,455.76 577.19,457.44 575.58,459.02" fill="none" stroke="#c6c6c6" stroke-width="2.4" stroke-opacity="0.85" stroke-linecap="round"/>
<polyline points="579.24,393.35 579.96,394.47 580.65,395.61 581.32,396.77 581.97,397.94 582.59,399.13 583.18,400.33 583.75,401.55 584.29,402.77 584.80,404.01 585.29,405.26 585.75,406.52 586.18,407.78 586.58,409.05 586.96,410.33 587.30,411.62 587.62,412.91 587.91,414.21 588.17,415.51 588.40,416.81 588.59,418.11 588.76,419.41 588.90,420.71 589.01,422.02 589.09,423.32 589.14,424.61 589.16,425.90 589.15,427.19 589.10,428.47 589.03,429.75 588.93,431.02 588.80,432.28 588.63,433.53 588.44,434.77 588.22,436.00 587.97,437.22 587.69,438.43 587.37,439.62 587.03,440.80 586.67,441.96 586.27,443.11" fill="none" stroke="#d0d0d0" stroke-width="1.2" stroke-opacity="0.6" stroke-linecap="round"/>
<polyline points="560.06,469.76 557.00,470.33 553.88,470.65 550.72,470.71 547.53,470.52 544.33,470.08 541.13,469.40 537.95,468.47 534.80,467.29 531.71,465.88 528.68,464.25 525.73,462.39 522.87,460.32 520.12,458.05 517.49,455.59 515.00,452.95 512.65,450.14 510.46,447.19 508.43,444.09 506.59,440.88 504.93,437.56 503.47,434.14 502.21,430.66 501.16,427.11 500.32,423.53 499.70,419.93 499.30,416.32 499.13,412.72 499.17,409.16 499.44,405.64 499.94,402.18 500.65,398.81 501.58,395.54 502.71,392.38 504.06,389.36 505.60,386.47 507.34,383.75 509.26,381.19 511.36,378.82 513.61,376.65 516.02,374.68" fill="none" stroke="#555" stroke-width="0.8" stroke-opacity="0.7" stroke-linecap="round"/>
<polygon points="531.3,387.8 543.6,392.3 539.1,399 515,409.7" fill="#474747"/>
<polygon points="543.6,392.3 559.3,400.2 539.1,399" fill="#b4b4b4"/>
<polygon points="539.1,399 559.3,400.2 566,418.1 550.4,432" fill="#dadada"/>
<polygon points="515,409.7 539.1,399 550.4,432 527.2,443.2" fill="#999999"/>
<polygon points="566,418.1 570.4,430 566,437.2 550.4,432" fill="#b8b8b8"/>
<polygon points="527.2,443.2 550.4,432 566,437.2 554.4,452.8" fill="#5e5e5e"/>
</svg>
<!--EX--><div class="abs" style="left:1017px;top:0;width:5px;height:625px;background:#4b3f4b"></div>
<div class="abs" style="left:1018.5px;top:5px;width:3.5px;height:55px;background:#4b3f70"></div>
<div class="abs" style="left:1018.5px;top:60px;width:3.5px;height:44px;background:#9a889a"></div>
<div class="abs" style="left:1018.5px;top:104px;width:3.5px;height:46px;background:#4a86a0"></div>
<div class="abs" style="left:1018.5px;top:150px;width:3.5px;height:38px;background:#9a889a"></div>
<div class="abs" style="left:1018.5px;top:188px;width:3.5px;height:30px;background:#4a86a0"></div>
<div class="abs" style="left:1018.5px;top:218px;width:3.5px;height:52px;background:#9a889a"></div>
<div class="abs" style="left:1018.5px;top:270px;width:3.5px;height:75px;background:#4a86a0"></div>
<div class="abs" style="left:1018.5px;top:345px;width:3.5px;height:280px;background:#8f7b8e"></div>
<div class="abs" style="left:1017px;top:85px;width:1.5px;height:540px;background:#d6d6d6"></div>
<div class="abs" style="left:1017px;top:8px;width:1px;height:77px;background:#cfcfcf"></div>
<div class="abs" style="left:1018px;top:5px;width:1px;height:80px;background:#4a3f80"></div>
<svg id="nav" class="abs" style="left:0;top:0" width="1022" height="625" viewBox="0 0 1022 625">
<g fill="#f4f4fa">
<path d="M981.8,88.3 L985.5,93 L978,93 Z" transform="translate(3.7 0)"/>
<path d="M981.8,145.5 L985.5,140.8 L978,140.8 Z" transform="translate(3.7 0)"/>
<path d="M957.5,117 L961.3,113.2 L961.3,120.8 Z"/>
<path d="M1013.8,117 L1010,113.2 L1010,120.8 Z"/>
</g>
<path d="M965.5,99.5 Q970,95 977,92" fill="none" stroke="#f4f4fa" stroke-width="2.2" stroke-linecap="round"/>
<path d="M994,92 Q1001,95 1005.5,99.5" fill="none" stroke="#f4f4fa" stroke-width="2.2" stroke-linecap="round"/>
<path d="M977,101.8 Q986,99 991.5,101.5 L1002.5,113 Q1003.5,116.5 1001,119 L983,134.5 Q980.5,136 978.5,134 L969.5,120 Q967.5,115 970,111 Z" fill="#fbfbff"/>
<path d="M976.5,106.5 L981,102.5 L994.5,116.5 L990,120.5 Z" fill="#dde3f0"/><path d="M990,121 L1002.5,113.5 Q1003.5,116.5 1001,119 L986,132 Z" fill="#e4e6f0"/><circle cx="992" cy="122" r="3" fill="#f0f0f8"/>
<path d="M972.5,115 L981.5,127.5" stroke="#333" stroke-width="1.4" stroke-dasharray="1 0.6"/>
<path d="M988.5,105 L994.5,111.5" stroke="#333" stroke-width="1.1"/>
<path d="M982.5,109 L983.5,111" stroke="#333" stroke-width="1"/>
<path d="M966,117.5 L980.5,136" stroke="#a02020" stroke-width="0.9"/>
<path d="M981,135.5 L998,121" stroke="#40c040" stroke-width="0.8"/>
<path d="M981.5,136.5 L996.5,125" stroke="#2050c0" stroke-width="0.8"/>
<rect x="995.5" y="134.5" width="8" height="7.5" rx="1.5" fill="#d8d8d8"/><ellipse cx="999.5" cy="135" rx="4" ry="1.3" fill="#f2f2f2"/>
<path d="M1005.5,137 h4 l-2,2.5 z" fill="#2a2a44"/>
<!-- axis cross -->
<path d="M990.4,588.4 L980,577" stroke="#b03030" stroke-width="0.8"/>
<path d="M990.4,588.4 L1000.5,575" stroke="#6a7a30" stroke-width="0.9"/>
<path d="M990.4,588.4 L998,585" stroke="#2a3ab0" stroke-width="0.9"/>
<ellipse cx="982" cy="579.5" rx="2" ry="1.6" fill="#c02020" transform="rotate(40 982 579.5)"/>
<ellipse cx="997.8" cy="578" rx="2.4" ry="1.6" fill="#7a8a20" transform="rotate(-50 997.8 578)"/>
<circle cx="996.3" cy="578.5" r="0.5" fill="#30ff30"/><circle cx="998.5" cy="576.6" r="0.5" fill="#30ff30"/>
<ellipse cx="996.5" cy="585.6" rx="2.2" ry="1.2" fill="#2040d0" transform="rotate(-25 996.5 585.6)"/>
<text x="980" y="575.5" font-size="3.5" fill="#444" font-family="Liberation Sans">X</text>
<text x="1000.5" y="573" font-size="3.5" fill="#444" font-family="Liberation Sans">Y</text>
<text x="1000" y="585" font-size="3.5" fill="#444" font-family="Liberation Sans">Z</text>
</svg>
<div class="abs" style="left:369px;top:615px;width:648px;height:10px;background:#e6e6e6"></div>
<div class="abs" style="left:648.2px;top:616.2px;width:90.5px;height:14px;border-radius:3px;background:linear-gradient(#5ea2f9,#2f7ef5)"></div>
<div class="abs" style="left:655.8px;top:619px;width:8.5px;height:8.5px;border-radius:50%;background:#707070"></div>
<svg class="abs" style="left:655.8px;top:619px" width="9" height="9"><path d="M2.6,2.6 L5.9,5.9 M5.9,2.6 L2.6,5.9" stroke="#ddd" stroke-width="1.2"/></svg>
<div class="abs" style="left:669.5px;top:617px;font-size:9.7px;line-height:12px;color:#fff;white-space:nowrap">Unnamed : 1*</div>
<div class="abs" style="left:365.6px;top:101px;width:2.5px;height:524px;background:#dedede"></div>
<div class="abs" style="left:368px;top:85px;width:1px;height:540px;background:#979797"></div>
<svg class="abs" style="left:0;top:85px" width="30" height="16"><path d="M-2,5.5 L2.8,10.3 M2.8,5.5 L-2,10.3" stroke="#fff" stroke-width="1.8"/><path d="M11.8,7.5 V11 H16.5 V8.5" fill="none" stroke="#fff" stroke-width="1.2"/><path d="M13.5,7 L16.8,5.8" stroke="#fff" stroke-width="0.9"/></svg><!--/EX-->
</body></html>
